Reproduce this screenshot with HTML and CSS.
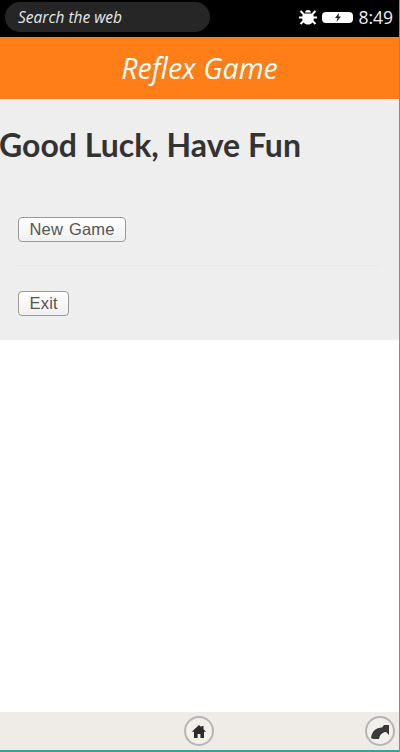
FILE: index.html
```html
<!DOCTYPE html>
<html lang="en">
<head>
    <meta charset="UTF-8">
    <title>Reflex Game</title>
    <link rel="stylesheet" href="styles.css">
</head>
<body>
    <div class="phone">
        <div class="status-bar">
            <div class="search-pill">Search the web</div>
            <div class="status-icons">
                <svg class="bug-icon" width="18" height="16" viewBox="0 0 18 16">
                    <path d="M6 3.500C6.300 1.800 7.500 1 9 1s2.700.8 3 2.500z" fill="#fff"/>
                    <path d="M4.200 4.500h9.600c.7 1.200 1 2.700 1 4.500 0 3.800-2.300 6.500-5.800 6.500S3.200 12.800 3.200 9c0-1.800.3-3.300 1-4.500z" fill="#fff"/>
                    <path d="M1.500 2l3 3M16.500 2l-3 3M0 8.500h4M18 8.500h-4M1.500 15l3-3M16.500 15l-3-3" stroke="#fff" stroke-width="2" fill="none"/>
                </svg>
                <div class="battery">
                    <svg width="8" height="9" viewBox="0 0 8 9">
                        <path d="M5 0L1 5h2.500L2.500 9 7 3.500H4.500z" fill="#222"/>
                    </svg>
                </div>
                <span class="clock">8:49</span>
            </div>
        </div>

        <div class="app-header">
            <h1 class="app-title">Reflex Game</h1>
        </div>

        <div class="content-panel">
            <h2 class="greeting">Good Luck, Have Fun</h2>
            <ul class="menu-list">
                <li class="menu-row"><button class="menu-btn">New Game</button></li>
                <li class="menu-row"><button class="menu-btn">Exit</button></li>
            </ul>
        </div>

        <div class="spacer"></div>

        <div class="bottom-bar">
            <button class="round-btn home-btn">
                <svg width="16" height="15" viewBox="0 0 16 15">
                    <path d="M8 1L.8 7.800h2.200V14h3.600v-4h2.800v4H13V7.800h2.200L12.500 5.200V2h-2v1.300z" fill="#2b2b2b"/>
                </svg>
            </button>
            <button class="round-btn share-btn">
                <svg width="20" height="17" viewBox="0 0 20 17">
                    <path d="M1 15C2 8 6 4.500 12 4.500L14 2h5v10l-3-3C13 9 10 11 9 16H3z" fill="#3a3a3a"/>
                </svg>
            </button>
        </div>
        <div class="teal-line"></div>
    </div>
</body>
</html>
```

FILE: styles.css
```css
* {
    box-sizing: border-box;
}
html, body {
    margin: 0;
    padding: 0;
    height: 100%;
}
body {
    font-family: "Open Sans", "Noto Sans", sans-serif;
    background: #fff;
}
.phone {
    height: 752px;
    display: flex;
    flex-direction: column;
    border-right: 1px solid #8a8a8a;
}
.status-bar {
    height: 37px;
    background: #000;
    display: flex;
    align-items: center;
    justify-content: space-between;
    padding: 0 6px 3px 5px;
}
.search-pill {
    width: 205px;
    height: 30px;
    background: #262626;
    border-radius: 15px;
    color: #e4e8ec;
    font-style: italic;
    font-size: 15.5px;
    line-height: 30px;
    padding-left: 13px;
}
.status-icons {
    display: flex;
    align-items: center;
    gap: 5px;
}
.battery {
    width: 31px;
    height: 11px;
    background: #fff;
    border-radius: 4px;
    display: flex;
    align-items: center;
    justify-content: center;
}
.clock {
    color: #f2f2f2;
    font-size: 17.5px;
}
.app-header {
    height: 62px;
    background: #ff7e17;
    display: flex;
    align-items: center;
    justify-content: center;
}
.app-title {
    margin: 0;
    color: #fff;
    font-size: 28.5px;
    font-weight: 400;
    font-style: italic;
}
.content-panel {
    background: #eee;
    height: 241px;
}
.greeting {
    margin: 0 0 0 -1px;
    padding-top: 26px;
    font-family: Lato, "Open Sans", sans-serif;
    font-size: 32px;
    line-height: 40px;
    font-weight: 700;
    color: #333;
    white-space: nowrap;
}
.menu-list {
    list-style: none;
    margin: 27px 0 0;
    padding: 0 18px;
}
.menu-row {
    height: 75px;
    padding-top: 25px;
    border-bottom: 1px solid #e8e8e8;
}
.menu-row:first-child {
    height: 74px;
}
.menu-row:last-child {
    border-bottom: none;
}
.menu-btn {
    height: 25px;
    padding: 0 10.5px;
    background: linear-gradient(#fff, #f0f0f0);
    border: 1.5px solid #999;
    border-radius: 4px;
    font-family: "Liberation Sans", Arial, sans-serif;
    font-size: 16.5px;
    letter-spacing: .2px;
    word-spacing: 1px;
    color: #555;
}
.spacer {
    flex: 1;
}
.bottom-bar {
    height: 38px;
    background: #efebe6;
    display: flex;
    align-items: center;
    justify-content: flex-end;
    gap: 151px;
    padding: 0 4px 0 0;
}
.round-btn {
    width: 30px;
    height: 30px;
    padding: 0;
    border-radius: 50%;
    border: 2px solid #b5b5b5;
    background: #f3f0ec;
    display: flex;
    align-items: center;
    justify-content: center;
}
.teal-line {
    height: 2px;
    background: #27a99c;
}
```
